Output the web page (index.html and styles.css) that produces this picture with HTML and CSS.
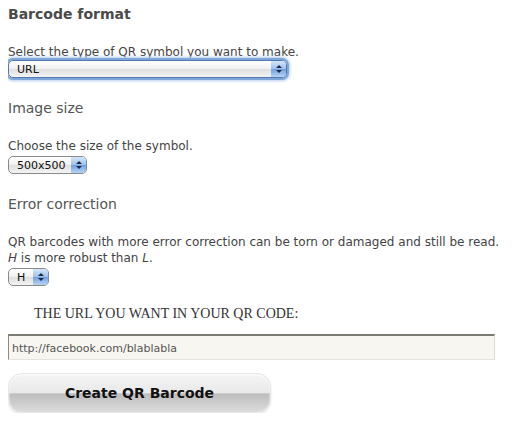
FILE: index.html
```html
<!DOCTYPE html>
<html>
<head>
    <title>QR Barcode</title>
    <link rel="stylesheet" href="styles.css">
</head>
<body>
    <form class="qr-form">
        <h3 class="section-title">Barcode format</h3>
        <p class="hint">Select the type of QR symbol you want to make.</p>
        <span class="select select-focus select-wide">
            <select>
                <option>URL</option>
            </select>
            <span class="arrows"><i class="up"></i><i class="down"></i></span>
        </span>

        <h3 class="section-title light">Image size</h3>
        <p class="hint">Choose the size of the symbol.</p>
        <span class="select select-size">
            <select>
                <option>500x500</option>
            </select>
            <span class="arrows"><i class="up"></i><i class="down"></i></span>
        </span>

        <h3 class="section-title light">Error correction</h3>
        <p class="hint">QR barcodes with more error correction can be torn or damaged and still be read.<br><em>H</em> is more robust than <em>L</em>.</p>
        <span class="select select-level">
            <select>
                <option>H</option>
            </select>
            <span class="arrows"><i class="up"></i><i class="down"></i></span>
        </span>

        <p class="url-label">THE URL YOU WANT IN YOUR QR CODE:</p>
        <input class="url-input" type="text" value="http://facebook.com/blablabla">

        <button class="create-button" type="button">Create QR Barcode</button>
    </form>
</body>
</html>
```

FILE: styles.css
```css
body {
    margin: 6px 8px;
    background-color: #fff;
    color: #444;
    font-family: "DejaVu Sans", Verdana, sans-serif;
    font-size: 12px;
}
.qr-form {
    display: flex;
    flex-direction: column;
    align-items: flex-start;
}
.section-title {
    margin: 0;
    font-size: 14px;
    font-weight: bold;
    color: #4a4a4a;
    line-height: 16px;
}
.section-title.light {
    font-weight: normal;
    color: #555;
    margin-top: 22px;
}
.hint {
    margin: 22px 0 0 0;
    line-height: 16px;
    color: #444;
}
.hint em {
    font-style: italic;
}
.select {
    position: relative;
    display: inline-block;
    height: 18px;
    margin-top: 2px;
    border: 1px solid #8a8a8a;
    border-radius: 5px;
    background: linear-gradient(#fff, #f0f0f0 50%, #dedede 51%, #f4f4f4);
    box-sizing: border-box;
}
.select-focus {
    box-shadow: 0 0 0 2px #7fa6d8, 0 0 3px 3px #b4cdee;
    border-color: #5479b0;
}
.select select {
    appearance: none;
    -webkit-appearance: none;
    border: none;
    background: transparent;
    height: 16px;
    padding: 0 0 0 8px;
    font-family: "DejaVu Sans", Verdana, sans-serif;
    font-size: 11px;
    color: #111;
    outline: none;
}
.select-wide {
    width: 279px;
    margin-top: 0;
}
.select-wide select {
    width: 260px;
}
.select-size {
    width: 79px;
}
.select-size select {
    width: 62px;
}
.select-level {
    width: 41px;
}
.select-level select {
    width: 24px;
}
.arrows {
    position: absolute;
    top: 0;
    right: 0;
    width: 15px;
    height: 16px;
    border-radius: 0 4px 4px 0;
    background: linear-gradient(#d6e6fa, #9cc1ee 50%, #6f9fde 51%, #b7d4f6);
    display: flex;
    flex-direction: column;
    align-items: center;
    justify-content: center;
    gap: 2px;
}
.arrows i {
    width: 0;
    height: 0;
    border-left: 3px solid transparent;
    border-right: 3px solid transparent;
}
.arrows .up {
    border-bottom: 3px solid #1c2a44;
}
.arrows .down {
    border-top: 3px solid #1c2a44;
}
.url-label {
    margin: 20px 0 0 26px;
    font-family: "Liberation Serif", "Times New Roman", serif;
    font-size: 14px;
    color: #333;
    line-height: 16px;
}
.url-input {
    margin-top: 12px;
    width: 487px;
    height: 26px;
    box-sizing: border-box;
    padding: 2px 3px 0 3px;
    background-color: #f7f6f0;
    border-top: 2px solid #7b7b74;
    border-left: 1px solid #8a8a83;
    border-right: 1px solid #dcdcd4;
    border-bottom: 1px solid #e4e4dc;
    font-family: "DejaVu Sans", Verdana, sans-serif;
    font-size: 11px;
    color: #555;
    outline: none;
}
.create-button {
    margin-top: 13px;
    width: 263px;
    height: 40px;
    border: 1px solid #e6e6e6;
    border-radius: 14px;
    background: linear-gradient(#f4f4f4, #e9e9e9 50%, #bdbdbd 52%, #cfcfcf 80%, #dcdcdc);
    box-shadow: inset 0 1px 2px #fff, 0 1px 2px rgba(0, 0, 0, 0.15);
    font-family: "DejaVu Sans", Verdana, sans-serif;
    font-size: 14px;
    font-weight: bold;
    color: #111;
    padding: 0;
    cursor: pointer;
}
```
